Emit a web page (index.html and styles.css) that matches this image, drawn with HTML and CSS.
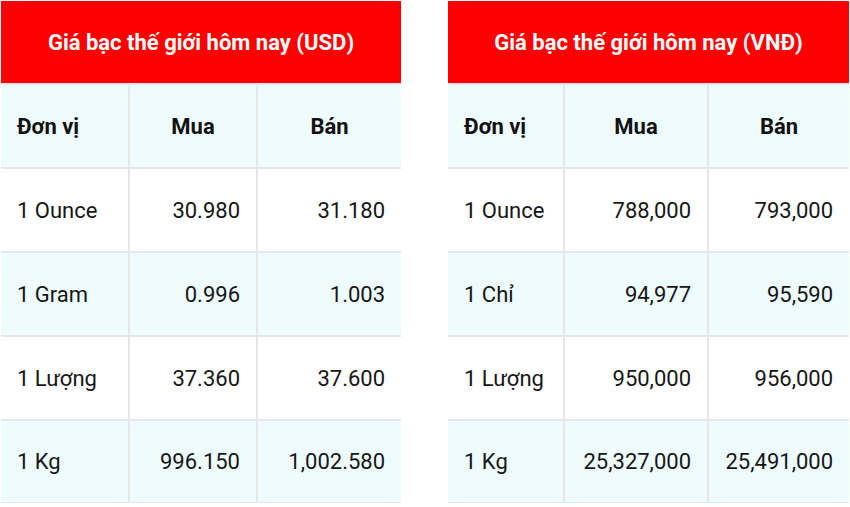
FILE: index.html
```html
<!DOCTYPE html>
<html lang="vi">
<head>
<meta charset="utf-8">
<title>Giá bạc thế giới hôm nay</title>
<link rel="stylesheet" href="styles.css">
</head>
<body>
<div class="wrap">
  <table class="price usd">
    <colgroup><col class="c1"><col class="c2"><col class="c3"></colgroup>
    <thead>
      <tr><th class="title" colspan="3">Giá bạc thế giới hôm nay (USD)</th></tr>
      <tr class="head"><th class="unit">Đơn vị</th><th>Mua</th><th>Bán</th></tr>
    </thead>
    <tbody>
      <tr><td class="unit">1 Ounce</td><td class="num">30.980</td><td class="num">31.180</td></tr>
      <tr class="alt"><td class="unit">1 Gram</td><td class="num">0.996</td><td class="num">1.003</td></tr>
      <tr><td class="unit">1 Lượng</td><td class="num">37.360</td><td class="num">37.600</td></tr>
      <tr class="alt"><td class="unit">1 Kg</td><td class="num">996.150</td><td class="num">1,002.580</td></tr>
    </tbody>
  </table>
  <table class="price vnd">
    <colgroup><col class="c1"><col class="c2"><col class="c3"></colgroup>
    <thead>
      <tr><th class="title" colspan="3">Giá bạc thế giới hôm nay (VNĐ)</th></tr>
      <tr class="head"><th class="unit">Đơn vị</th><th>Mua</th><th>Bán</th></tr>
    </thead>
    <tbody>
      <tr><td class="unit">1 Ounce</td><td class="num">788,000</td><td class="num">793,000</td></tr>
      <tr class="alt"><td class="unit">1 Chỉ</td><td class="num">94,977</td><td class="num">95,590</td></tr>
      <tr><td class="unit">1 Lượng</td><td class="num">950,000</td><td class="num">956,000</td></tr>
      <tr class="alt"><td class="unit">1 Kg</td><td class="num">25,327,000</td><td class="num">25,491,000</td></tr>
    </tbody>
  </table>
</div>
</body>
</html>
```
FILE: styles.css
```css
html, body {
  margin: 0;
  padding: 0;
  background: #ffffff;
}
body {
  font-family: Roboto, "Noto Sans", "Liberation Sans", sans-serif;
  color: #161616;
}
.wrap {
  display: flex;
  gap: 47px;
  padding: 1px 0 0 1px;
}
.price {
  border-collapse: separate;
  border-spacing: 0;
  table-layout: fixed;
  font-size: 22px;
}
.usd { width: 400px; }
.vnd { width: 401px; }
.usd .c1 { width: 127px; }
.usd .c2 { width: 128px; }
.usd .c3 { width: 145px; }
.vnd .c1 { width: 115px; }
.vnd .c2 { width: 144px; }
.vnd .c3 { width: 142px; }
.price th, .price td {
  box-sizing: border-box;
  height: 84px;
  padding: 0 16px;
  border-top: 2px solid #e6e8e8;
  vertical-align: middle;
  white-space: nowrap;
}
.price th + th, .price td + td {
  border-left: 2px solid #e6e8e8;
}
.price .title {
  height: 82px;
  border-top: 0;
  background: #ff0000;
  color: #ffffff;
  font-weight: 700;
  font-size: 22px;
  text-align: center;
}
.head th {
  background: #effcfd;
  font-weight: 700;
  color: #111111;
  text-align: center;
}
.head th.unit { text-align: left; }
.price tbody tr { background: #ffffff; }
.price tbody tr.alt { background: #effcfd; }
.price tbody tr:last-child td { border-bottom: 1px solid #e6e8e8; }
.unit { text-align: left; }
.num { text-align: right; }
```
